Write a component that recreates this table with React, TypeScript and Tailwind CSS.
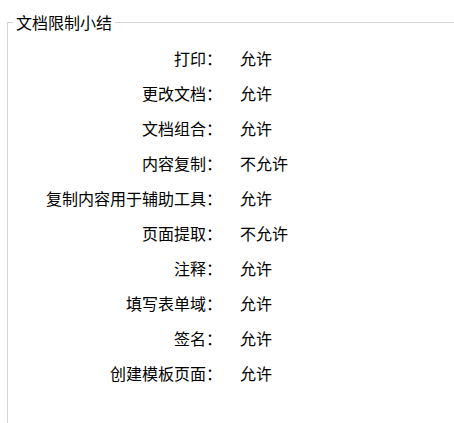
const rows: [string, string][] = [
  ['打印：', '允许'],
  ['更改文档：', '允许'],
  ['文档组合：', '允许'],
  ['内容复制：', '不允许'],
  ['复制内容用于辅助工具：', '允许'],
  ['页面提取：', '不允许'],
  ['注释：', '允许'],
  ['填写表单域：', '允许'],
  ['签名：', '允许'],
  ['创建模板页面：', '允许'],
];

export default function App() {
  return (
    <div
      className="h-[423px] w-[454px] overflow-hidden bg-white pl-[7px] pt-[11px] text-black"
      style={{ fontFamily: '"Noto Sans CJK SC", "Noto Sans", sans-serif' }}
    >
      <fieldset className="h-[450px] w-[470px] border border-[#d5d5d5] pl-[5px]">
        <legend className="px-[3px] text-[16px] leading-[22px]">文档限制小结</legend>
        <div className="-ml-[5px] pt-[8px]">
          {rows.map(([label, value]) => (
            <div key={label} className="flex text-[16px] leading-[35px]">
              <div className="w-[214px] text-right">{label}</div>
              <div className="ml-[18px]">{value}</div>
            </div>
          ))}
        </div>
      </fieldset>
    </div>
  );
}
